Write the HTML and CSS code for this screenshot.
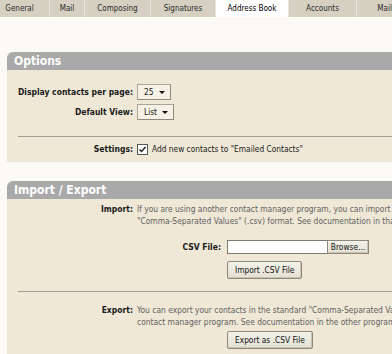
FILE: index.html
```html
<!DOCTYPE html>
<html lang="en">
<head>
  <meta charset="UTF-8">
  <title>Options - Address Book</title>
  <meta name="viewport" content="width=device-width, initial-scale=1.0">
  <link rel="stylesheet" href="styles.css">
</head>
<body>

  <div class="tabs">
    <a class="tab">General</a>
    <a class="tab">Mail</a>
    <a class="tab">Composing</a>
    <a class="tab">Signatures</a>
    <a class="tab active">Address Book</a>
    <a class="tab">Accounts</a>
    <a class="tab">Mail Filters</a>
  </div>

  <div class="page">

    <div class="panel">
      <div class="panel-head">Options</div>
      <div class="panel-body">
        <div class="field">
          <span class="label">Display contacts per page:</span>
          <span class="select">25</span>
        </div>
        <div class="field">
          <span class="label">Default View:</span>
          <span class="select">List</span>
        </div>
        <hr class="rule">
        <div class="field">
          <span class="label">Settings:</span>
          <label class="check">
            <span class="box">
              <svg width="9" height="9" viewBox="0 0 9 9"><path d="M1.5 4.5 L3.5 6.5 L7.5 2" fill="none" stroke="#222" stroke-width="1.4"/></svg>
            </span>
            Add new contacts to "Emailed Contacts"
          </label>
        </div>
      </div>
    </div>

    <div class="panel io">
      <div class="panel-head">Import / Export</div>
      <div class="panel-body">
        <div class="field top">
          <span class="label">Import:</span>
          <div class="content">
            <p class="desc">If you are using another contact manager program, you can import those contacts here, as long as they are in the<br>"Comma-Separated Values" (.csv) format. See documentation in that program for instructions on saving them.</p>
            <div class="sub">
              <span class="label">CSV File:</span>
              <span class="file"><span class="file-input"></span><span class="btn browse">Browse...</span></span>
              <span></span>
              <button class="btn">Import .CSV File</button>
            </div>
          </div>
        </div>
        <hr class="rule">
        <div class="field top export">
          <span class="label">Export:</span>
          <div class="content">
            <p class="desc">You can export your contacts in the standard "Comma-Separated Values" (.csv) format to use them in another<br>contact manager program. See documentation in the other program for instructions on importing them.</p>
            <div class="sub tight">
              <span></span>
              <button class="btn">Export as .CSV File</button>
            </div>
          </div>
        </div>
      </div>
    </div>

  </div>

</body>
</html>
```

FILE: styles.css
```css
:root {
  --page: #fbfaf6;
  --tabbar: #d6d0c2;
  --head: #a9a9a9;
  --body: #efe8d6;
  --rule: #a39e93;
  --text: #1a1a1a;
  --muted: #616161;
}

* {
  margin: 0;
  padding: 0;
  box-sizing: border-box;
}

html, body {
  background: var(--page);
  font-family: 'DejaVu Sans Condensed', 'DejaVu Sans', sans-serif;
  font-size: 8.3px;
  color: var(--text);
  overflow: hidden;
}

/* Tabs */
.tabs {
  display: grid;
  grid-template-columns: 60px 35px 66px 65px 73px 68px 80px;
  height: 17px;
  margin-left: -10px;
  width: 460px;
  background: var(--tabbar);
  font-size: 8px;
}

.tab {
  display: flex;
  align-items: center;
  justify-content: center;
  color: #2a2a2a;
  border-right: 1px solid #e9e5da;
  white-space: nowrap;
}

.tab.active {
  background: #fff;
  color: #000;
}

/* Panels */
.page {
  padding: 35px 0 0 7px;
  width: 480px;
}

.panel + .panel {
  margin-top: 19px;
}

.panel-head {
  height: 18px;
  line-height: 18px;
  padding-left: 7px;
  background: var(--head);
  color: #fff;
  font-size: 12px;
  font-weight: bold;
  border-top-left-radius: 6px;
}

.panel-body {
  background: var(--body);
  padding: 12px 0 3px;
}

.field {
  display: grid;
  grid-template-columns: 126px auto;
  column-gap: 4px;
  align-items: center;
  height: 20px;
}

.field.top {
  height: auto;
  align-items: start;
}

.label {
  text-align: right;
  font-weight: bold;
  font-size: 8.5px;
  white-space: nowrap;
}

.field.top > .label {
  line-height: 11px;
}

.rule {
  border: none;
  border-top: 1px solid var(--rule);
  margin: 14px 0 2px 11px;
}

.select {
  position: relative;
  display: inline-block;
  justify-self: start;
  height: 16px;
  line-height: 14px;
  padding: 0 16px 0 6px;
  border: 1px solid #aaa497;
  border-right-color: #8f8a7e;
  border-bottom-color: #8f8a7e;
  background: #f6f1e6;
}

.select::after {
  content: '';
  position: absolute;
  right: 5px;
  top: 6px;
  border-left: 3px solid transparent;
  border-right: 3px solid transparent;
  border-top: 3px solid #111;
}

.check {
  display: flex;
  align-items: center;
  gap: 4px;
}

.box {
  display: flex;
  align-items: center;
  justify-content: center;
  width: 11px;
  height: 11px;
  border: 1px solid #555;
  background: #fff;
}

/* Import / Export */
.io .panel-body {
  padding-top: 5px;
  padding-bottom: 20px;
}

.io .rule {
  margin: 12px 0 0 11px;
}

.field.export {
  padding-top: 13px;
}

.desc {
  color: var(--muted);
  font-size: 8.4px;
  line-height: 11.5px;
  white-space: nowrap;
}

.sub {
  display: grid;
  grid-template-columns: 84px auto;
  column-gap: 6px;
  row-gap: 7px;
  align-items: center;
  justify-items: start;
  margin-top: 13px;
}

.sub.tight {
  margin-top: 3px;
}

.sub .label {
  justify-self: end;
}

.file {
  display: flex;
}

.file-input {
  width: 100px;
  height: 14px;
  background: #fff;
  border: 1px solid #7e796e;
  border-right: none;
}

.btn {
  font-family: inherit;
  font-size: 8.3px;
  color: #111;
  height: 18px;
  padding: 0 7px;
  background: linear-gradient(#f4f2ea, #e3dfd2);
  border: 1px solid #8d887c;
  border-radius: 2px;
  box-shadow: inset -1px -1px 0 #c9c4b6;
}

.btn.browse {
  display: flex;
  align-items: center;
  height: 14px;
  width: 42px;
  padding: 0;
  justify-content: center;
  border-radius: 0;
}
```
